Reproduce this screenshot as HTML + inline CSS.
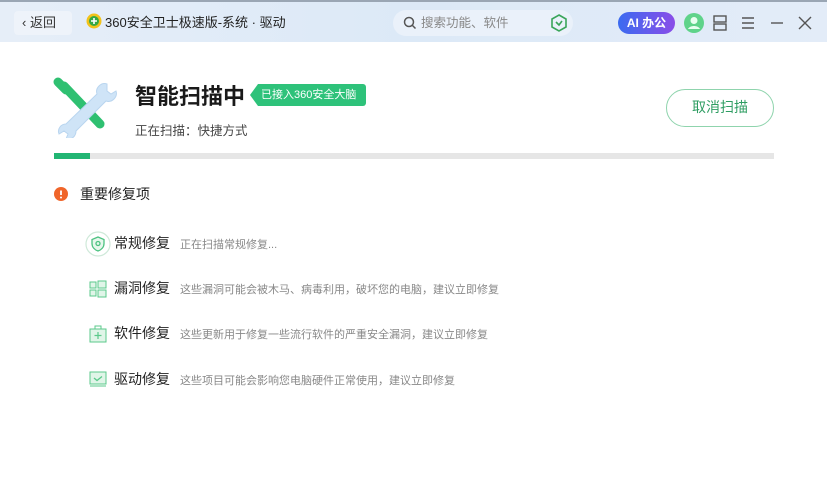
<!DOCTYPE html>
<html><head><meta charset="utf-8"><style>
*{margin:0;padding:0;box-sizing:border-box}
body{width:827px;height:500px;overflow:hidden;background:#fff;font-family:"Liberation Sans","Noto Sans CJK SC",sans-serif;position:relative;color:#222}
.bar{position:absolute;left:0;top:0;width:827px;height:42px;background:linear-gradient(90deg,#e6eef8,#dce9f7 50%,#e3ecf8);border-top:2px solid #9aa6b4}
.abs{position:absolute}
.back{left:14px;top:9px;width:58px;height:24px;background:#eef3fa;border-radius:4px;font-size:13px;color:#333;line-height:24px;padding-left:8px}
.title{top:11px;font-size:13px;color:#222;line-height:20px}
.search{left:393px;top:8px;width:180px;height:26px;background:#eaf1fa;border-radius:13px;font-size:12.5px;color:#888;line-height:26px;padding-left:28px}
.ai{left:618px;top:10px;width:57px;height:22px;border-radius:11px;background:linear-gradient(90deg,#3b6bf0,#8a4de8);color:#fff;font-size:12px;font-weight:bold;text-align:center;line-height:22px}
.row{position:absolute;font-size:14px;color:#222;line-height:20px}
.row .d{font-size:11px;color:#888;margin-left:10px}
</style></head><body>
<div class="bar">
<div class="abs back">‹ 返回</div>
<svg class="abs" style="left:86px;top:11px" width="16" height="16"><circle cx="8" cy="8" r="7.5" fill="#f2c21a"/><circle cx="8" cy="8" r="5" fill="#35a843"/><path d="M8 5v6M5 8h6" stroke="#fff" stroke-width="1.6"/></svg>
<div class="abs title" style="left:105px">360安全卫士极速版-系统 · 驱动</div>
<div class="abs search">搜索功能、软件</div>
<svg class="abs" style="left:403px;top:14px" width="14" height="14"><circle cx="6" cy="6" r="4.5" stroke="#555" stroke-width="1.5" fill="none"/><path d="M9.5 9.5l3 3" stroke="#555" stroke-width="1.5"/></svg>
<svg class="abs" style="left:551px;top:12px" width="16" height="18"><path d="M8 1l7 4v8l-7 4-7-4V5z" fill="none" stroke="#3aa55a" stroke-width="1.6"/><path d="M5 8l3 3 3-4" stroke="#3aa55a" stroke-width="1.6" fill="none"/></svg>
<div class="abs ai">AI 办公</div>
<svg class="abs" style="left:683px;top:10px" width="22" height="22"><circle cx="11" cy="11" r="10" fill="#5fd38a"/><circle cx="11" cy="8.5" r="3.5" fill="#e8fff0"/><path d="M5 17c2-4 10-4 12 0" fill="#e8fff0"/></svg>
<svg class="abs" style="left:712px;top:12px" width="16" height="18"><rect x="2" y="2" width="12" height="6" fill="none" stroke="#555" stroke-width="1.4"/><rect x="2" y="10" width="12" height="6" fill="none" stroke="#555" stroke-width="1.4"/></svg>
<svg class="abs" style="left:741px;top:14px" width="14" height="14"><path d="M1 2h12M1 7h12M1 12h12" stroke="#555" stroke-width="1.4"/></svg>
<svg class="abs" style="left:770px;top:14px" width="14" height="14"><path d="M1 7h12" stroke="#555" stroke-width="1.4"/></svg>
<svg class="abs" style="left:798px;top:14px" width="14" height="14"><path d="M1 1l12 12M13 1L1 13" stroke="#555" stroke-width="1.4"/></svg>
</div>

<svg class="abs" style="left:52px;top:76px" width="66" height="62">
<path d="M6 6l8 8M12 10l36 38" stroke="#2fc071" stroke-width="9" stroke-linecap="round"/>
<path d="M55 8c-6-2-12 4-10 10L14 48c-5 0-9 5-7 10l5-3 4 3-2 5c6 1 10-3 10-8l30-30c6 2 12-4 10-10l-5 3-4-3z" fill="#cfe4f7" stroke="#b9d5ef"/>
</svg>
<div class="abs" style="left:135px;top:82px;font-size:22px;font-weight:bold;color:#1a1a1a;line-height:30px">智能扫描中</div>
<div class="abs" style="left:250px;top:84px;width:116px;height:22px;background:#2ec27a;color:#fff;font-size:11px;line-height:22px;padding-left:11px;clip-path:polygon(8px 0,100% 0,100% 100%,8px 100%,0 50%);border-radius:3px">已接入360安全大脑</div>
<div class="abs" style="left:135px;top:120px;font-size:12.5px;color:#444">正在扫描：快捷方式</div>
<div class="abs" style="left:666px;top:89px;width:108px;height:38px;border:1.5px solid #8fd4ad;border-radius:19px;color:#2e9d62;font-size:14px;text-align:center;line-height:35px">取消扫描</div>
<div class="abs" style="left:54px;top:153px;width:720px;height:6px;background:#e6e6e6"><div style="width:36px;height:6px;background:#22b573"></div></div>

<svg class="abs" style="left:54px;top:187px" width="14" height="14"><circle cx="7" cy="7" r="7" fill="#f0652a"/><path d="M7 3.5v4.5" stroke="#fff" stroke-width="1.8"/><circle cx="7" cy="10.5" r="1" fill="#fff"/></svg>
<div class="abs" style="left:80px;top:184px;font-size:14px;color:#222">重要修复项</div>

<svg class="abs" style="left:85px;top:231px" width="26" height="26"><circle cx="13" cy="13" r="12" fill="#fff" stroke="#cfe9d9" stroke-width="1.2"/><path d="M13 6l6 2.5v4c0 4-3 6.5-6 7.5-3-1-6-3.5-6-7.5v-4z" fill="#e6f7ec" stroke="#4cc281" stroke-width="1.3"/><circle cx="13" cy="12.5" r="2" fill="none" stroke="#4cc281" stroke-width="1.3"/></svg>
<div class="row" style="left:114px;top:233px">常规修复<span class="d">正在扫描常规修复...</span></div>

<svg class="abs" style="left:88px;top:280px" width="20" height="18"><rect x="2" y="2" width="6" height="6" fill="#e0f5e8" stroke="#5bc98b"/><rect x="10" y="1" width="8" height="7" fill="#e0f5e8" stroke="#5bc98b"/><rect x="2" y="10" width="6" height="6" fill="#e0f5e8" stroke="#5bc98b"/><rect x="10" y="10" width="8" height="7" fill="#e0f5e8" stroke="#5bc98b"/></svg>
<div class="row" style="left:114px;top:278px">漏洞修复<span class="d">这些漏洞可能会被木马、病毒利用，破坏您的电脑，建议立即修复</span></div>

<svg class="abs" style="left:88px;top:325px" width="20" height="18"><rect x="2" y="4" width="16" height="13" fill="#e0f5e8" stroke="#5bc98b"/><rect x="7" y="1" width="6" height="3" fill="none" stroke="#5bc98b"/><path d="M10 7v7M6.5 10.5h7" stroke="#5bc98b" stroke-width="1.2"/></svg>
<div class="row" style="left:114px;top:323px">软件修复<span class="d">这些更新用于修复一些流行软件的严重安全漏洞，建议立即修复</span></div>

<svg class="abs" style="left:88px;top:370px" width="20" height="18"><rect x="2" y="2" width="16" height="12" fill="#e0f5e8" stroke="#5bc98b"/><path d="M6 8l3 2.5 5-4" stroke="#5bc98b" stroke-width="1.3" fill="none"/><path d="M2 16h16" stroke="#5bc98b"/></svg>
<div class="row" style="left:114px;top:369px">驱动修复<span class="d">这些项目可能会影响您电脑硬件正常使用，建议立即修复</span></div>
</body></html>
